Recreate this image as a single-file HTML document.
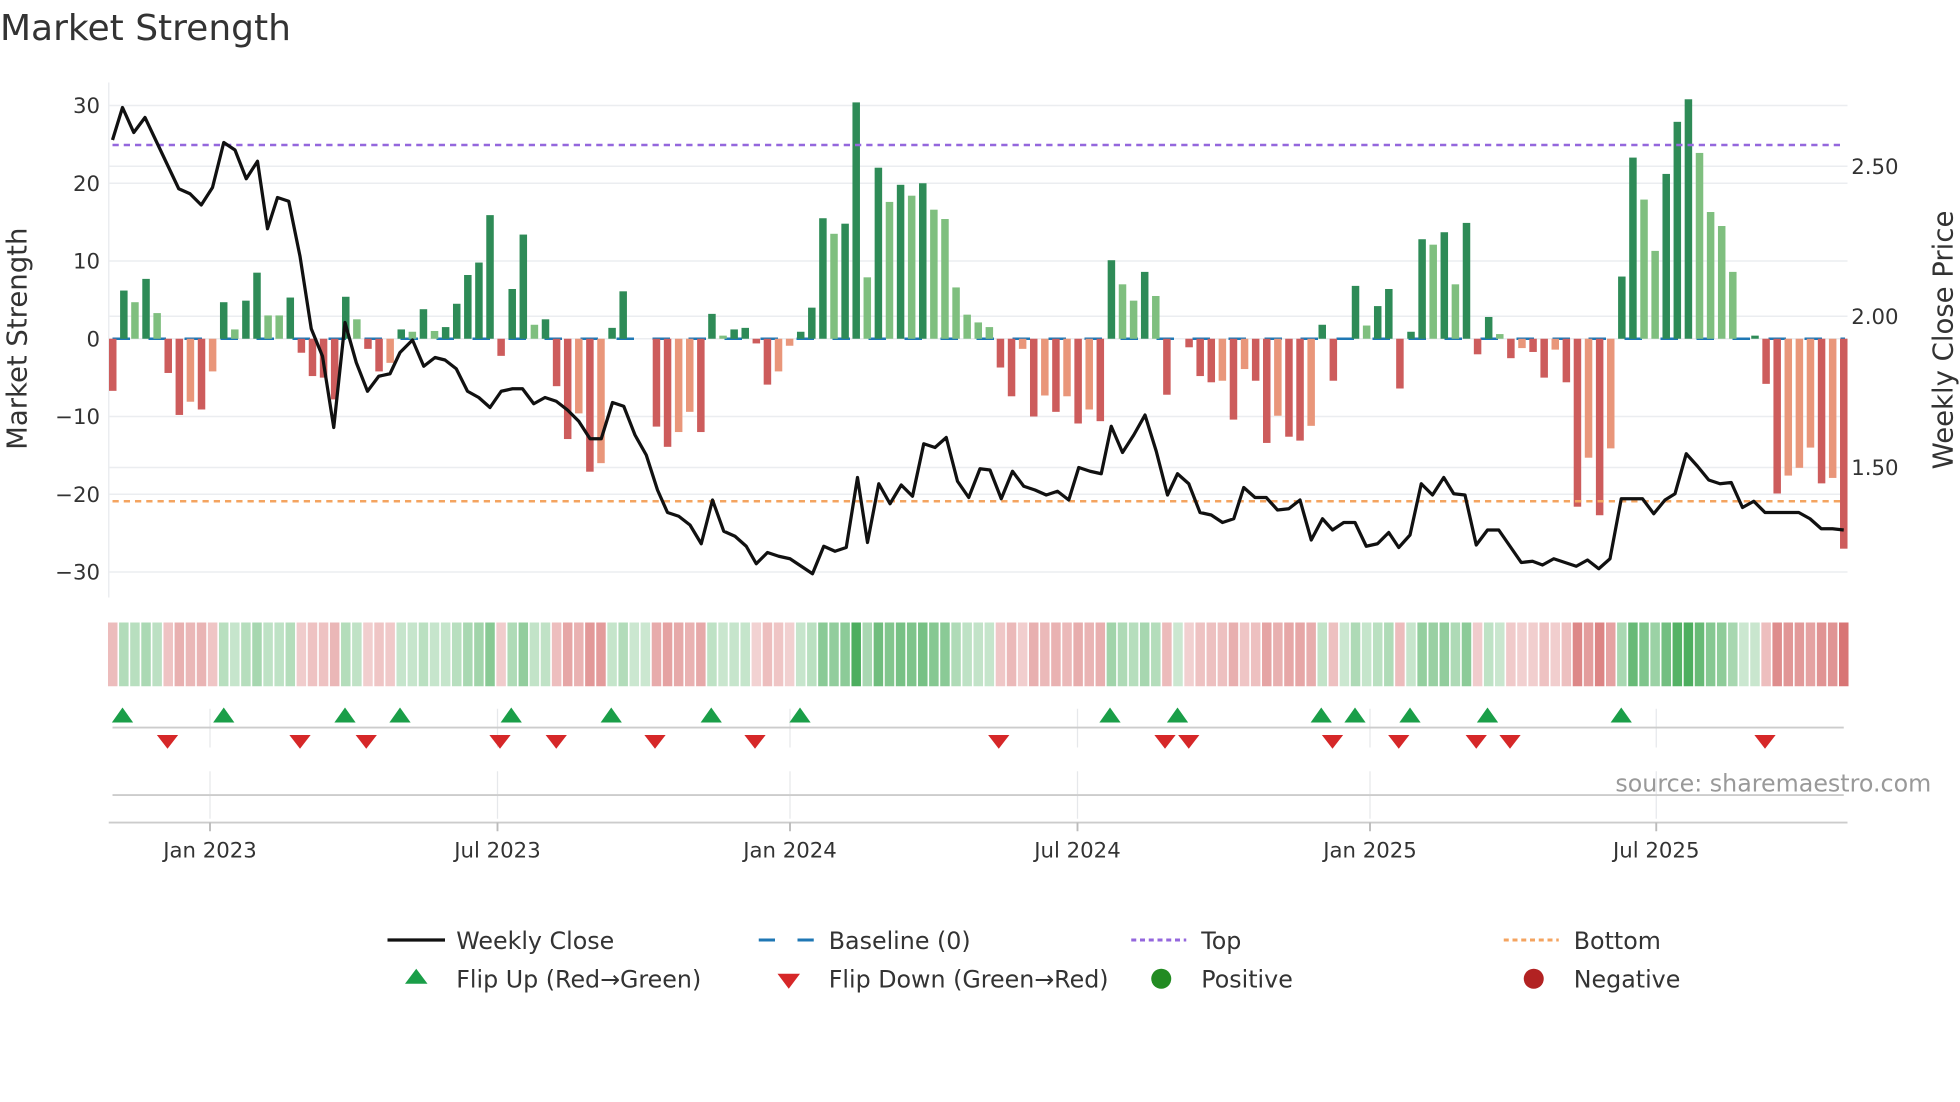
<!DOCTYPE html>
<html><head><meta charset="utf-8"><style>
html,body{margin:0;padding:0;background:#fff;}
svg{display:block;font-family:"DejaVu Sans","Liberation Sans",sans-serif;}
</style></head><body>
<svg id="s" width="1960" height="1102" viewBox="0 0 1568 881.6" xmlns="http://www.w3.org/2000/svg">
<rect width="1568" height="881.6" fill="#fff"/>
<text x="0" y="32" font-size="28.8" fill="#333">Market Strength</text>
<g id="grid" stroke="#ebedf0" stroke-width="1.2"></g>
<line x1="87" y1="66" x2="87" y2="478" stroke="#ebedf0" stroke-width="1.2"/>
<g id="ylab" font-size="17" fill="#333" text-anchor="end"></g>
<text transform="translate(21,271) rotate(-90)" font-size="22" fill="#333" text-anchor="middle">Market Strength</text>
<g font-size="17" fill="#333">
<text x="1481" y="139">2.50</text><text x="1481" y="259">2.00</text><text x="1481" y="380">1.50</text>
</g>
<text transform="translate(1562,272) rotate(-90)" font-size="22" fill="#333" text-anchor="middle">Weekly Close Price</text>
<line x1="90" y1="271" x2="1476" y2="271" stroke="#1f77b4" stroke-width="2" stroke-dasharray="14 14.8"/>
<g id="bars"></g>
<line x1="90" y1="116" x2="1476" y2="116" stroke="#9467dd" stroke-width="2" stroke-dasharray="5 4"/>
<line x1="90" y1="401" x2="1476" y2="401" stroke="#f4a460" stroke-width="2" stroke-dasharray="5 4"/>
<polyline id="price" fill="none" stroke="#111" stroke-width="2.6" stroke-linejoin="round"/>
<g id="strip"></g>
<g stroke="#e6e8eb" stroke-width="1">
<line x1="168" y1="567" x2="168" y2="598"/><line x1="398" y1="567" x2="398" y2="598"/><line x1="632" y1="567" x2="632" y2="598"/><line x1="862" y1="567" x2="862" y2="598"/><line x1="1096" y1="567" x2="1096" y2="598"/><line x1="1325" y1="567" x2="1325" y2="598"/>
<line x1="168" y1="617" x2="168" y2="655"/><line x1="398" y1="617" x2="398" y2="655"/><line x1="632" y1="617" x2="632" y2="655"/><line x1="862" y1="617" x2="862" y2="655"/><line x1="1096" y1="617" x2="1096" y2="655"/><line x1="1325" y1="617" x2="1325" y2="655"/>
</g>
<line x1="90" y1="582" x2="1475" y2="582" stroke="#ccc" stroke-width="1.5"/>
<line x1="90" y1="636" x2="1475" y2="636" stroke="#ccc" stroke-width="1.5"/>
<line x1="87" y1="658" x2="1478" y2="658" stroke="#ccc" stroke-width="1.5"/>
<g id="mk"></g>
<text x="1545" y="633" font-size="19" fill="#999" text-anchor="end">source: sharemaestro.com</text>
<g stroke="#bbb" stroke-width="1.5">
<line x1="168" y1="658" x2="168" y2="665"/><line x1="398" y1="658" x2="398" y2="665"/><line x1="632" y1="658" x2="632" y2="665"/><line x1="862" y1="658" x2="862" y2="665"/><line x1="1096" y1="658" x2="1096" y2="665"/><line x1="1325" y1="658" x2="1325" y2="665"/>
</g>
<g font-size="17" fill="#333" text-anchor="middle">
<text x="168" y="686">Jan 2023</text><text x="398" y="686">Jul 2023</text><text x="632" y="686">Jan 2024</text><text x="862" y="686">Jul 2024</text><text x="1096" y="686">Jan 2025</text><text x="1325" y="686">Jul 2025</text>
</g>
<g font-size="19" fill="#333">
<line x1="310" y1="752" x2="356" y2="752" stroke="#111" stroke-width="2.6"/>
<text x="365" y="759">Weekly Close</text>
<line x1="607" y1="752" x2="651" y2="752" stroke="#1f77b4" stroke-width="2.4" stroke-dasharray="13 18"/>
<text x="663" y="759">Baseline (0)</text>
<line x1="905" y1="752" x2="949" y2="752" stroke="#9467dd" stroke-width="2.4" stroke-dasharray="4 3"/>
<text x="961" y="759">Top</text>
<line x1="1203" y1="752" x2="1247" y2="752" stroke="#f4a460" stroke-width="2.4" stroke-dasharray="4 3"/>
<text x="1259" y="759">Bottom</text>
<polygon points="333,775 342,787 324,787" fill="#1a9e48"/>
<text x="365" y="790">Flip Up (Red→Green)</text>
<polygon points="622,779 640,779 631,791" fill="#d62728"/>
<text x="663" y="790">Flip Down (Green→Red)</text>
<circle cx="929" cy="783" r="8" fill="#228b22"/>
<text x="961" y="790">Positive</text>
<circle cx="1227" cy="783" r="8" fill="#b22222"/>
<text x="1259" y="790">Negative</text>
</g>
</svg>
<script>
(function(){
var NS="http://www.w3.org/2000/svg";
function el(p,t,a){var e=document.createElementNS(NS,t);for(var k in a)e.setAttribute(k,a[k]);p.appendChild(e);return e;}
var g=document.getElementById('grid'),yl=document.getElementById('ylab');
[30,20,10,0,-10,-20,-30].forEach(function(v){var y=271-v*6.22;el(g,'line',{x1:87,y1:y,x2:1478,y2:y});var t=el(yl,'text',{x:80,y:y+6});t.textContent=(v<0?'\u2212'+(-v):v);});
[133,253,374].forEach(function(y){el(g,'line',{x1:87,y1:y,x2:1478,y2:y});});
var v=[-6.7,6.2,4.7,7.7,3.3,-4.4,-9.8,-8.1,-9.1,-4.2,4.7,1.2,4.9,8.5,3.0,3.0,5.3,-1.8,-4.8,-5,-7.8,5.4,2.5,-1.3,-4.2,-3.1,1.2,0.9,3.8,1.0,1.5,4.5,8.2,9.8,15.9,-2.2,6.4,13.4,1.8,2.5,-6.1,
-12.9,-9.6,-17.1,-16,1.4,6.1,0,0,-11.3,-13.9,-12,-9.4,-12,3.2,0.4,1.2,1.4,-0.6,-5.9,-4.2,-0.9,0.9,4.0,15.5,13.5,14.8,30.4,7.9,22,17.6,19.8,18.4,20,16.6,15.4,6.6,3.1,2.1,1.5,
-3.7,-7.4,-1.3,-10,-7.3,-9.4,-7.4,-10.9,-9.1,-10.6,10.1,7.0,4.9,8.6,5.5,-7.2,0,-1.1,-4.8,-5.6,-5.4,-10.4,-3.9,-5.4,-13.4,-9.9,-12.6,-13.1,-11.2,1.8,-5.4,0,6.8,1.7,4.2,6.4,-6.4,0.9,12.8,12.1,
13.7,7.0,14.9,-2.0,2.8,0.6,-2.5,-1.2,-1.7,-5.0,-1.4,-5.6,-21.6,-15.3,-22.7,-14.1,8.0,23.3,17.9,11.3,21.2,27.9,30.8,23.9,16.3,14.5,8.6,0,0.4,-5.8,-19.9,-17.6,-16.6,-14,-18.6,-17.9,-27];
var L={};[2,4,11,14,15,22,27,29,38,55,65,68,70,72,74,75,76,77,78,79,91,92,94,113,119,121,125,138,139,143,144,145,146,7,9,25,42,44,51,52,60,61,82,84,86,88,100,102,105,108,127,130,133,135,151,152,153,155].forEach(function(i){L[i]=1;});
var bars=document.getElementById('bars'),strip=document.getElementById('strip');
for(var i=0;i<v.length;i++){
 var x=90.2+i*8.877,val=v[i],h=Math.abs(val)*6.22,pos=val>=0;
 var c=pos?(L[i]?'#7fbf7f':'#2e8b57'):(L[i]?'#e9967a':'#cd5c5c');
 if(h>0.3) el(bars,'rect',{x:x-3,y:pos?271-h:271,width:6,height:h,fill:c});
 var a=0.25+0.6*Math.min(Math.abs(val)/30,1);
 var sc=pos?'rgba(46,160,67,'+a.toFixed(2)+')':'rgba(205,80,80,'+a.toFixed(2)+')';
 el(strip,'rect',{x:x-3.8,y:498,width:7.6,height:51,fill:sc});
}
var p="90,112 98,86 107,106 116,94 125,113 134,132 143,151 152,155 161,164 170,150 179,114 188,120 197,143 206,129 214,183 222,158 231,161 240,205 249,263 258,285 267,342 276,258 285,290 294,313 303,301 312,299 320,282 330,272 339,293 348,286 356,288 365,295 374,313 383,318 392,326 401,313 410,311 418,311 427,323 436,318 445,321 454,328 463,337 472,351 481,351 490,322 499,325 508,348 517,364 526,392 534,410 543,413 552,420 561,435 570,400 579,425 588,429 597,437 605,451 614,442 623,445 632,447 641,453 650,459 659,437 668,441 677,438 686,382 694,434 703,387 712,403 721,388 730,397 739,355 748,358 757,350 766,385 775,398 784,375 792,376 801,399 810,377 819,389 828,392 837,396 846,393 855,400 863,374 872,377 881,379 889,341 898,362 907,348 916,332 925,361 934,396 942,379 951,387 960,410 969,412 978,418 987,415 995,390 1004,398 1013,398 1022,408 1031,407 1040,400 1049,432 1058,415 1066,424 1075,418 1084,418 1093,437 1102,435 1111,426 1119,438 1128,428 1137,387 1146,396 1155,382 1163,395 1172,396 1181,436 1190,424 1199,424 1208,437 1217,450 1226,449 1234,452 1243,447 1252,450 1261,453 1270,448 1279,455 1288,447 1297,399 1305,399 1314,399 1323,411 1332,400 1340,395 1349,363 1358,373 1367,384 1376,387 1385,386 1394,406 1403,401 1412,410 1421,410 1430,410 1439,410 1448,415 1457,423 1466,423 1475,424";
document.getElementById('price').setAttribute('points',p);
var mk=document.getElementById('mk');
[98,179,276,320,409,489,569,640,888,942,1057,1084,1128,1190,1297].forEach(function(x){el(mk,'polygon',{points:x+',566 '+(x+8.5)+',578 '+(x-8.5)+',578',fill:'#1a9e48'});});
[134,240,293,400,445,524,604,799,932,951,1066,1119,1181,1208,1412].forEach(function(x){el(mk,'polygon',{points:(x-8.5)+',588 '+(x+8.5)+',588 '+x+',599',fill:'#d62728'});});
})();
</script>
</body></html>
